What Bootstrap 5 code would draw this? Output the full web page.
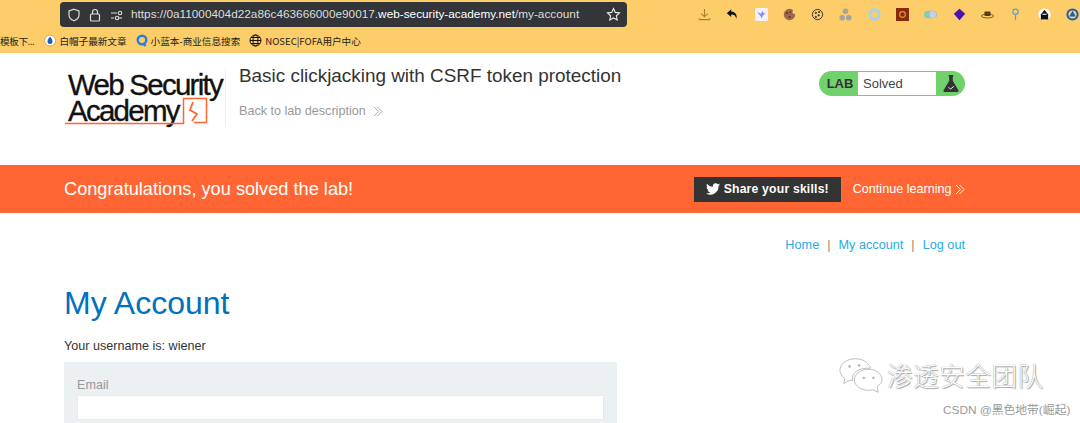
<!DOCTYPE html>
<html lang="en">
<head>
  <meta charset="UTF-8" />
  <title>My Account</title>
  <link href="https://cdn.jsdelivr.net/npm/bootstrap@5.3.0/dist/css/bootstrap.min.css" rel="stylesheet" />
  <style>
    html, body { height: 423px; overflow: hidden; }
    body { position: relative; background: #fff; font-family: "Liberation Sans", Arial, "Noto Sans CJK SC", sans-serif; font-size: 14px; color: #333; }
    a { text-decoration: none; }

    .browser-bar { height: 53px; background: #fccd68; }
    .url-row { height: 30px; padding-top: 2px; }
    .url-box { margin-left: 60px; width: 567px; height: 25px; background: #333539; border-radius: 4px; color: #dcdcdc; font-size: 11.8px; padding: 0 6px 0 7px; flex: none; }
    .url-box svg { flex: none; }
    .url-gap { margin-left: 9px; }
    .url-text { margin-left: 8px; white-space: nowrap; }
    .url-text b { font-weight: 400; color: #fff; }
    .ext-row { margin-left: auto; height: 25px; gap: 15.3px; padding-left: 4px; width: 386px; overflow: hidden; }
    .ext-row svg { flex: none; width: 13px; height: 13px; }
    .book-row { height: 22px; font-size: 9.6px; color: #222; gap: 9px; font-family: "Noto Sans CJK SC", sans-serif; white-space: nowrap; overflow: hidden; }
    .book-item { gap: 3px; }
    .book-cut { letter-spacing: -.4px; margin-right: 1px; }

    .lab-head { height: 112px; padding: 0 115px 0 64px; }
    .logo-box { width: 158px; height: 58px; margin-top: 16px; flex: none; position: relative; border-right: 1px solid #eee; box-sizing: content-box; padding-right: 3px; }
    .logo-text { display: block; font-size: 29.5px; line-height: 26px; color: #111; letter-spacing: -1.75px; padding: 3px 0 0 4px; white-space: nowrap; -webkit-text-stroke: .35px #111; }
    .logo-mark { position: absolute; left: 0; top: 0; }
    .lab-title { margin: 11px 0 0 13px; }
    .lab-title h2 { font-size: 18.9px; font-weight: 400; line-height: 24px; margin: 0; color: #333; }
    .back-link { display: block; margin-top: 13px; color: #999; font-size: 12.6px; line-height: 20px; }
    .status-pill { margin: 18px 0 0 auto; width: 146px; height: 25px; background: #70d16d; border-radius: 13px; overflow: hidden; flex: none; }
    .status-lab { width: 39px; text-align: center; font-weight: 700; font-size: 13px; color: #333; padding-left: 3px; line-height: 25px; }
    .status-text { width: 78px; height: 23px; margin-top: 1px; background: #fff; padding-left: 5px; line-height: 23px; font-size: 13px; color: #444; }
    .status-icon { flex: 1; }

    .solved-bar { height: 48px; background: #ff6633; padding: 0 115px 0 64px; color: #fff; }
    .solved-bar h4 { font-size: 18.2px; font-weight: 400; margin: 0; padding-top: 2px; }
    .share-btn { background: #333; color: #fff; font-weight: 700; font-size: 12.2px; height: 25px; width: 147px; margin-left: auto; letter-spacing: .2px; gap: 4px; }
    .continue-link { color: #fff; font-size: 12.6px; margin-left: 12px; white-space: nowrap; }

    .top-links { padding: 22px 115px 0 0; height: 51px; font-size: 12.7px; line-height: 20px; text-align: right; color: #9a8468; }
    .top-links a { color: #29abe2; }
    .top-links span { margin: 0 8px; }
    .acct-main { padding-left: 64px; }
    .acct-main h1 { font-size: 32px; font-weight: 400; color: #0071bc; margin: 20px 0 0; line-height: 39px; }
    .user-line { margin: 13px 0 0; font-size: 12.6px; line-height: 20px; color: #333; }
    .email-panel { margin-top: 6px; width: 553px; height: 61px; background: #ebf0f2; padding: 15px 13px 0; }
    .email-panel label { display: block; color: #999; font-size: 12.6px; line-height: 16px; margin-bottom: 2px; }
    .email-panel input { display: block; width: 527px; height: 25px; background: #fff; border: 1px solid #e6ebee; padding: 0; }

    .wm-mark { position: absolute; left: 839px; top: 357px; }
    .wm-title { position: absolute; left: 887px; top: 359px; font-size: 25.6px; line-height: 32px; letter-spacing: .5px; color: #fff; text-shadow: 0 0 1px #777, 1px 1px 1px #aaa; font-family: "Noto Sans CJK SC", sans-serif; font-weight: 300; white-space: nowrap; }
    .wm-csdn { position: absolute; left: 943px; top: 403px; font-size: 11.8px; line-height: 14px; color: #999; font-family: "Liberation Sans", "Noto Sans CJK SC", sans-serif; white-space: nowrap; }
  </style>
</head>
<body>

  <div class="browser-bar">
    <div class="url-row d-flex align-items-start">
      <div class="url-box d-flex align-items-center">
        <svg width="14" height="14" viewBox="0 0 14 14" fill="none" stroke="#ddd" stroke-width="1.2"><path d="M7 1.2 12 3v4c0 3-2.2 4.8-5 5.8C4.200 11.800 2 10 2 7V3z"/></svg>
        <svg class="ms-2" width="12" height="14" viewBox="0 0 12 14" fill="none" stroke="#ddd" stroke-width="1.2"><rect x="1.500" y="6" width="9" height="7" rx="1"/><path d="M3.500 6V4a2.500 2.500 0 0 1 5 0v2"/></svg>
        <svg class="url-gap" width="13" height="12" viewBox="0 0 13 12" fill="none" stroke="#ddd" stroke-width="1.1"><path d="M1 4h6M1 9h3"/><circle cx="10" cy="4" r="1.700"/><circle cx="7" cy="9" r="1.700"/><path d="M9 9h3"/></svg>
        <span class="url-text">https://0a11000404d22a86c463666000e90017.<b>web-security-academy.net</b>/my-account</span>
        <svg class="ms-auto" width="15" height="15" viewBox="0 0 15 15" fill="none" stroke="#eee" stroke-width="1.1"><path d="M7.500 1.500 9.300 5.400l4.200.5-3.100 2.900.8 4.200-3.700-2.100-3.700 2.100.8-4.200L1.500 5.900l4.200-.5z"/></svg>
      </div>
      <div class="ext-row d-flex align-items-center">
        <svg viewBox="0 0 14 14" fill="none" stroke="#a8822c" stroke-width="1.200"><path d="M7 1v8M3.500 6 7 9.500 10.500 6M1.500 11v1.500h11V11"/></svg>
        <svg viewBox="0 0 15 14"><path d="M6 1 1 5.500 6 10V7c3 0 5 1 6 5 1-5-1-8-6-8.500z" fill="#111"/></svg>
        <svg viewBox="0 0 16 16"><rect width="16" height="16" rx="2" fill="#f2f2fb"/><path d="M3 5l4 2 3-4v3l3 0-3 3-2 4-1-3-2-2z" fill="#8b8bf5"/></svg>
        <svg viewBox="0 0 16 16"><circle cx="8" cy="8" r="7" fill="#a0654d"/><circle cx="14" cy="5" r="2.500" fill="#fccd68"/><circle cx="5" cy="6" r="1.100" fill="#4b2a1e"/><circle cx="8" cy="11" r="1.100" fill="#4b2a1e"/><circle cx="9" cy="5" r="1" fill="#4b2a1e"/></svg>
        <svg viewBox="0 0 16 16" fill="none" stroke="#333" stroke-width="1.200"><circle cx="8" cy="8" r="6.300"/><circle cx="6" cy="6" r=".8" fill="#333"/><circle cx="9.500" cy="9" r=".8" fill="#333"/><circle cx="6" cy="11" r=".8" fill="#333"/><circle cx="10" cy="5" r=".8" fill="#333"/></svg>
        <svg viewBox="0 0 14 14" fill="#a6a39b"><circle cx="7" cy="3.500" r="3"/><circle cx="3.500" cy="10.500" r="3"/><circle cx="10.500" cy="10.500" r="3"/></svg>
        <svg viewBox="0 0 16 16" fill="none" stroke="#a3d4ee" stroke-width="3.600"><circle cx="8" cy="8" r="5.800"/></svg>
        <svg viewBox="0 0 16 16"><rect width="16" height="16" fill="#8a2a0c"/><circle cx="8" cy="8" r="3.500" fill="none" stroke="#d9973b" stroke-width="1.500"/></svg>
        <svg viewBox="0 0 17 12"><rect width="17" height="10" y="1" rx="5" fill="#7fcbb4"/><circle cx="11.500" cy="6" r="4.500" fill="#cfc8ef"/></svg>
        <svg viewBox="0 0 16 16"><path d="M8 1l7 6-7 8-7-8z" fill="#4a12b0"/></svg>
        <svg viewBox="0 0 17 12"><ellipse cx="8.500" cy="8" rx="8" ry="2.500" fill="none" stroke="#5a3d15"/><rect x="4.500" y="2" width="8" height="6" rx="1.500" fill="#5a3d15"/></svg>
        <svg viewBox="0 0 10 16" fill="none" stroke="#5a9fe0" stroke-width="1.500"><circle cx="5" cy="4.500" r="3.200"/><path d="M5 8v7"/></svg>
        <svg viewBox="0 0 16 16"><circle cx="8" cy="8" r="7.500" fill="#fff"/><path d="M8 2 12.500 8v6h-9V8z" fill="#111"/><rect x="5.500" y="7" width="5" height="1.500" fill="#ddd"/></svg>
        <svg viewBox="0 0 16 16"><circle cx="8" cy="8" r="7.500" fill="#1d5cb0"/><circle cx="8" cy="8" r="5" fill="#fccd68"/><path d="M8 3.500l4 7h-8z" fill="#1d5cb0"/></svg>
      </div>
    </div>
    <div class="book-row d-flex align-items-center">
      <span class="book-cut">模板下...</span>
      <span class="book-item d-flex align-items-center">
        <svg width="12" height="13" viewBox="0 0 12 13"><circle cx="6" cy="6.500" r="5.500" fill="#fff" stroke="#e8a33a"/><path d="M6 2.500c2 2.500 2.500 4 2.500 5a2.500 2.500 0 0 1-5 0c0-1 .5-2.500 2.500-5z" fill="#1a5fb4"/></svg>
        白帽子最新文章
      </span>
      <span class="book-item d-flex align-items-center">
        <svg width="12" height="13" viewBox="0 0 12 13" fill="none" stroke="#2a7de1" stroke-width="2.400"><circle cx="6" cy="6" r="4.300"/><path d="M7 9l2.500 3"/></svg>
        小蓝本-商业信息搜索
      </span>
      <span class="book-item d-flex align-items-center">
        <svg width="13" height="13" viewBox="0 0 13 13" fill="none" stroke="#111" stroke-width="1"><circle cx="6.500" cy="6.500" r="5.500"/><ellipse cx="6.500" cy="6.500" rx="2.500" ry="5.500"/><path d="M1 6.500h11M2 3.500h9M2 9.500h9"/></svg>
        NOSEC|FOFA用户中心
      </span>
    </div>
  </div>

  <div class="lab-head d-flex align-items-start">
    <div class="logo-box">
      <svg class="logo-mark" width="158" height="58" viewBox="0 0 158 58" fill="none" stroke="#ff6633" stroke-width="1.500">
        <path d="M1 54.500H119.500V29.500H142.500V53.500H130"/>
        <path d="M129 33 126 41 133 45 128 52" stroke-width="1.800"/>
      </svg>
      <span class="logo-text">Web Security<br>Academy</span>
    </div>
    <div class="lab-title">
      <h2>Basic clickjacking with CSRF token protection</h2>
      <a class="back-link" href="#">Back to lab description
        <svg class="ms-1" width="10" height="11" viewBox="0 0 10 11" fill="none" stroke="#aaa"><path d="M1 1l4.500 4.500L1 10M4.500 1 9 5.500 4.500 10"/></svg>
      </a>
    </div>
    <div class="status-pill d-flex">
      <div class="status-lab">LAB</div>
      <div class="status-text">Solved</div>
      <div class="status-icon d-flex align-items-center justify-content-center">
        <svg width="16" height="17" viewBox="0 0 17 18"><path d="M6 0h5v1.500h-.6V6l5.800 10a1.200 1.200 0 0 1-1 2H1.800a1.200 1.200 0 0 1-1-2L6.600 6V1.500H6z" fill="#333"/><path d="M6 13l2 2 3.500-3" fill="none" stroke="#fff"/></svg>
      </div>
    </div>
  </div>

  <section class="solved-bar d-flex align-items-center">
    <h4>Congratulations, you solved the lab!</h4>
    <a class="share-btn d-flex align-items-center justify-content-center" href="#">
      <svg width="14" height="12" viewBox="0 0 24 20"><path d="M24 2.400c-.9.400-1.800.7-2.800.8 1-.6 1.800-1.600 2.200-2.700-1 .6-2 1-3.100 1.200A4.900 4.900 0 0 0 11.900 6.200C7.800 6 4.200 4 1.700.9c-1.300 2.200-.7 5.100 1.500 6.600-.8 0-1.600-.2-2.200-.6 0 2.300 1.600 4.500 4 5-.7.200-1.500.2-2.200.1.600 2 2.500 3.400 4.600 3.400A9.900 9.900 0 0 1 0 17.500 14 14 0 0 0 21.500 5c1-.7 1.800-1.600 2.500-2.600z" fill="#fff"/></svg>
      Share your skills!
    </a>
    <a class="continue-link" href="#">Continue learning
      <svg width="10" height="11" viewBox="0 0 10 11" fill="none" stroke="#fff"><path d="M1 1l4.500 4.500L1 10M4.500 1 9 5.500 4.500 10"/></svg>
    </a>
  </section>

  <div class="top-links">
    <a href="#">Home</a><span>|</span><a href="#">My account</a><span>|</span><a href="#">Log out</a>
  </div>

  <main class="acct-main">
    <h1>My Account</h1>
    <p class="user-line">Your username is: wiener</p>
    <div class="email-panel">
      <label for="email">Email</label>
      <input id="email" type="email" />
    </div>
  </main>

  <svg class="wm-mark" width="44" height="36" viewBox="0 0 46 36" fill="#fff" stroke="#bbb" stroke-width="1">
    <path d="M17 1C8 1 1 6.500 1 13c0 3.500 2 6.500 5 8.500L5 27l6-3.500c1 .2 2 .3 3 .4C13 16 20 10 33 11 31 5 25 1 17 1z"/>
    <path d="M31 12c-8 0-15 5-15 11s7 11 15 11c1 0 3-.2 4-.5L41 36l-1-6c3-2 5-4 5-7 0-6-6-11-14-11z"/>
    <circle cx="26" cy="21" r="1" fill="#aaa"/><circle cx="36" cy="21" r="1" fill="#aaa"/>
    <circle cx="11" cy="9" r="1" fill="#aaa"/><circle cx="21" cy="8" r="1" fill="#aaa"/>
  </svg>
  <div class="wm-title">渗透安全团队</div>
  <div class="wm-csdn">CSDN @黑色地带(崛起)</div>

</body>
</html>
